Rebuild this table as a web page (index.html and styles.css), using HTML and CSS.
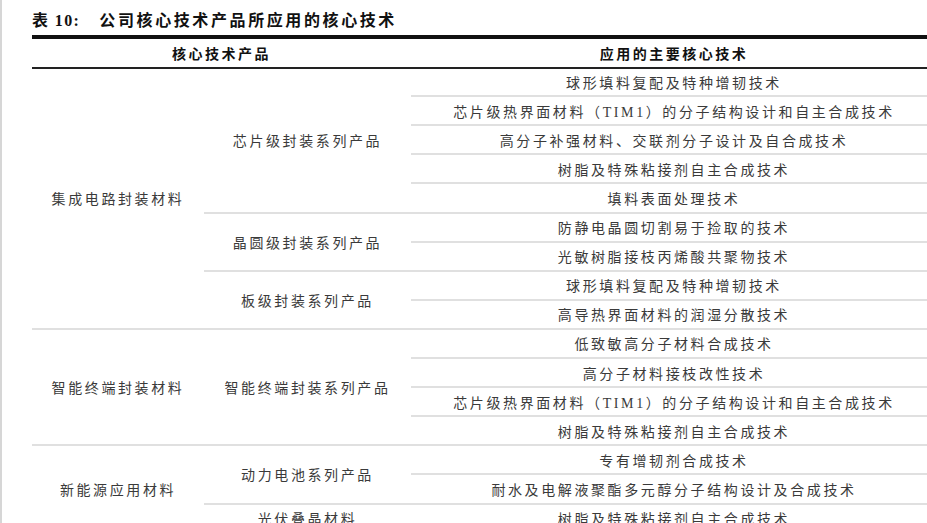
FILE: index.html
```html
<!DOCTYPE html>
<html lang="zh-CN">
<head>
<meta charset="utf-8">
<link rel="stylesheet" href="styles.css">
</head>
<body>
<div class="page">
  <div class="title"><span class="title-no">表 10:</span>公司核心技术产品所应用的核心技术</div>
  <div class="table">
    <div class="head h12">核心技术产品</div>
    <div class="head h3">应用的主要核心技术</div>

    <div class="cell s9">集成电路封装材料</div>
    <div class="cell s5">芯片级封装系列产品</div>
    <div class="cell">球形填料复配及特种增韧技术</div>
    <div class="cell">芯片级热界面材料（TIM1）的分子结构设计和自主合成技术</div>
    <div class="cell">高分子补强材料、交联剂分子设计及自合成技术</div>
    <div class="cell">树脂及特殊粘接剂自主合成技术</div>
    <div class="cell">填料表面处理技术</div>
    <div class="cell s2">晶圆级封装系列产品</div>
    <div class="cell">防静电晶圆切割易于捡取的技术</div>
    <div class="cell">光敏树脂接枝丙烯酸共聚物技术</div>
    <div class="cell s2">板级封装系列产品</div>
    <div class="cell">球形填料复配及特种增韧技术</div>
    <div class="cell">高导热界面材料的润湿分散技术</div>

    <div class="cell s4">智能终端封装材料</div>
    <div class="cell s4">智能终端封装系列产品</div>
    <div class="cell">低致敏高分子材料合成技术</div>
    <div class="cell">高分子材料接枝改性技术</div>
    <div class="cell">芯片级热界面材料（TIM1）的分子结构设计和自主合成技术</div>
    <div class="cell">树脂及特殊粘接剂自主合成技术</div>

    <div class="cell s3">新能源应用材料</div>
    <div class="cell s2">动力电池系列产品</div>
    <div class="cell">专有增韧剂合成技术</div>
    <div class="cell">耐水及电解液聚酯多元醇分子结构设计及合成技术</div>
    <div class="cell">光伏叠晶材料</div>
    <div class="cell">树脂及特殊粘接剂自主合成技术</div>
  </div>
</div>
</body>
</html>
```

FILE: styles.css
```css
html, body {
  margin: 0;
  padding: 0;
  background: #ffffff;
  overflow: hidden;
}

.page {
  width: 927px;
  height: 523px;
  box-sizing: border-box;
  border-left: 2px solid #d6d6d6;
  padding-left: 30px;
  font-family: "Liberation Serif", "Noto Sans CJK SC", serif;
  color: #333333;
  overflow: hidden;
}

.title {
  height: 35px;
  box-sizing: border-box;
  padding-top: 10px;
  font-size: 16px;
  line-height: 22px;
  font-weight: bold;
  letter-spacing: 2.6px;
  color: #111111;
  white-space: nowrap;
}

.title-no {
  margin-right: 19px;
  letter-spacing: 1.4px;
}

.table {
  width: 905px;
  border-top: 4px solid #111111;
  display: grid;
  grid-template-columns: 172px 207px 526px;
  grid-auto-rows: 29.1px;
}

.head {
  height: 30px;
  box-sizing: border-box;
  border-bottom: 2px solid #222222;
  display: flex;
  align-items: center;
  justify-content: center;
  font-size: 14px;
  font-weight: bold;
  letter-spacing: 2.5px;
  color: #111111;
  padding-bottom: 1px;
}

.h12 {
  grid-column: span 2;
}

.cell {
  box-sizing: border-box;
  border-bottom: 2px solid #e0e0e0;
  display: flex;
  align-items: center;
  justify-content: center;
  font-size: 14px;
  letter-spacing: 2.6px;
  white-space: nowrap;
  color: #3a3a3a;
}

.s2 { grid-row: span 2; }
.s3 { grid-row: span 3; }
.s4 { grid-row: span 4; }
.s5 { grid-row: span 5; }
.s9 { grid-row: span 9; }
```
